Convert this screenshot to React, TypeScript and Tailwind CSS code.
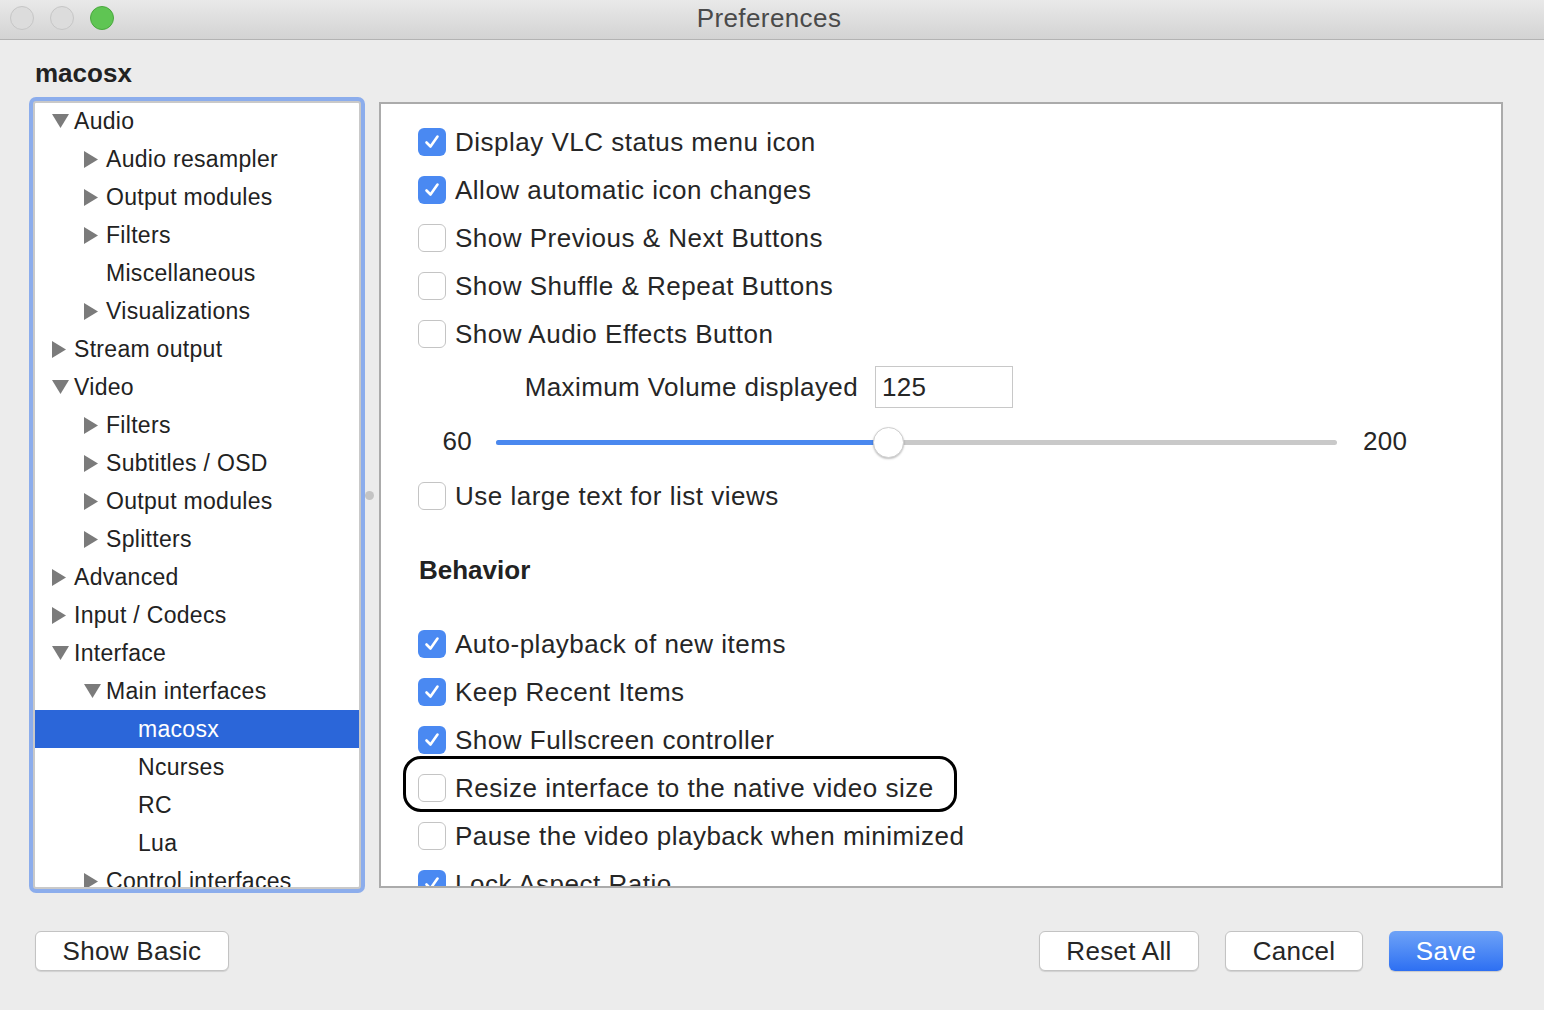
import React from "react"

type TreeItem = { label: string; level: number; arrow?: "down" | "right"; selected?: boolean }

const tree: TreeItem[] = [
  { label: "Audio", level: 0, arrow: "down" },
  { label: "Audio resampler", level: 1, arrow: "right" },
  { label: "Output modules", level: 1, arrow: "right" },
  { label: "Filters", level: 1, arrow: "right" },
  { label: "Miscellaneous", level: 1 },
  { label: "Visualizations", level: 1, arrow: "right" },
  { label: "Stream output", level: 0, arrow: "right" },
  { label: "Video", level: 0, arrow: "down" },
  { label: "Filters", level: 1, arrow: "right" },
  { label: "Subtitles / OSD", level: 1, arrow: "right" },
  { label: "Output modules", level: 1, arrow: "right" },
  { label: "Splitters", level: 1, arrow: "right" },
  { label: "Advanced", level: 0, arrow: "right" },
  { label: "Input / Codecs", level: 0, arrow: "right" },
  { label: "Interface", level: 0, arrow: "down" },
  { label: "Main interfaces", level: 1, arrow: "down" },
  { label: "macosx", level: 2, selected: true },
  { label: "Ncurses", level: 2 },
  { label: "RC", level: 2 },
  { label: "Lua", level: 2 },
  { label: "Control interfaces", level: 1, arrow: "right" },
]

const levelPad = ["pl-[17px]", "pl-[49px]", "pl-[81px]"]

function Arrow({ dir }: { dir: "down" | "right" }) {
  if (dir === "down")
    return (
      <svg width="17" height="14" viewBox="0 0 17 14">
        <path d="M0 0 H17 L8.5 14 Z" fill="#7b7b7b" />
      </svg>
    )
  return (
    <svg width="14" height="17" viewBox="0 0 14 17">
      <path d="M0 0 L14 8.5 L0 17 Z" fill="#7b7b7b" />
    </svg>
  )
}

function Checkbox({ checked }: { checked: boolean }) {
  if (checked)
    return (
      <div className="w-[28px] h-[28px] shrink-0 rounded-[6px] bg-[#4a89f2] flex items-center justify-center">
        <svg width="18" height="18" viewBox="0 0 18 18">
          <path d="M3.5 9.5 L7.5 13.5 L14.5 3.5" fill="none" stroke="white" strokeWidth="2.6" strokeLinecap="round" strokeLinejoin="round" />
        </svg>
      </div>
    )
  return <div className="w-[28px] h-[28px] shrink-0 rounded-[6px] bg-white border border-[#c4c4c4]" />
}

function CheckRow({ label, checked, outlined }: { label: string; checked: boolean; outlined?: boolean }) {
  return (
    <div className="relative h-12 flex items-center pl-[37px] gap-[9px] shrink-0">
      <Checkbox checked={checked} />
      <span className="text-[26px] tracking-[0.5px] text-[#262626] whitespace-nowrap">{label}</span>
      {outlined && (
        <div className="absolute left-[22px] top-[-8px] w-[554px] h-[56px] rounded-[18px] border-[3px] border-black" />
      )}
    </div>
  )
}

function Button({ children, w, primary }: { children: React.ReactNode; w: string; primary?: boolean }) {
  return (
    <div
      className={
        primary
          ? `${w} h-[40px] rounded-[6px] bg-gradient-to-b from-[#6ea2f7] to-[#2d6ff2] text-white text-[26px] tracking-[0.3px] flex items-center justify-center shadow-[0_1px_1px_rgba(0,0,0,0.15)]`
          : `${w} h-[40px] rounded-[6px] bg-white border border-[#c3c3c3] text-[#262626] text-[26px] tracking-[0.3px] flex items-center justify-center shadow-[0_1px_1px_rgba(0,0,0,0.12)]`
      }
    >
      {children}
    </div>
  )
}

export default function App() {
  return (
    <div className="w-[1544px] h-[1010px] bg-[#ececec] flex flex-col overflow-hidden font-['Liberation_Sans',Arial,sans-serif]">
      {/* title bar */}
      <div className="relative h-[40px] shrink-0 bg-gradient-to-b from-[#e9e9e9] to-[#d3d3d3] border-b border-[#b3b3b3] flex items-center">
        <div className="flex items-center gap-[16px] pl-[10px] -mt-[4px]">
          <div className="w-[24px] h-[24px] rounded-full bg-[#dcdcdc] border border-[#c6c6c6]" />
          <div className="w-[24px] h-[24px] rounded-full bg-[#dcdcdc] border border-[#c6c6c6]" />
          <div className="w-[24px] h-[24px] rounded-full bg-[#5fc553] border border-[#4aa83e]" />
        </div>
        <div className="absolute inset-0 flex items-center justify-center -mt-[2px]">
          <span className="text-[26px] tracking-[0.4px] text-[#4a4a4a] ml-[-6px]">Preferences</span>
        </div>
      </div>

      {/* header */}
      <div className="h-[61px] shrink-0 pl-[35px] pt-[6px] flex items-center">
        <span className="text-[26px] font-bold text-[#222]">macosx</span>
      </div>

      {/* main */}
      <div className="flex pl-[33px] h-[788px] shrink-0">
        <div className="w-[328px] h-[788px] bg-white border-2 border-[#c9c9c9] ring-4 ring-[#8cadec] rounded-[3px] overflow-hidden">
          <div className="-mt-[1px]">
            {tree.map((item, i) => (
              <div
                key={i}
                className={`h-[38px] flex items-center ${levelPad[item.level]} ${item.selected ? "bg-[#2b66d9] text-white" : "text-[#222]"}`}
              >
                <div className="w-[22px] shrink-0 flex items-center">{item.arrow && <Arrow dir={item.arrow} />}</div>
                <span className="text-[23px] tracking-[0.3px] whitespace-nowrap">{item.label}</span>
              </div>
            ))}
          </div>
        </div>

        <div className="w-[18px] flex items-center justify-center">
          <div className="w-[9px] h-[9px] rounded-full bg-[#c4c4c4] ml-[-1px]" />
        </div>

        <div className="w-[1124px] h-[786px] mt-[1px] bg-white border-2 border-[#ababab] overflow-hidden">
          <div className="pt-[14px] flex flex-col">
            <CheckRow label="Display VLC status menu icon" checked />
            <CheckRow label="Allow automatic icon changes" checked />
            <CheckRow label="Show Previous & Next Buttons" checked={false} />
            <CheckRow label="Show Shuffle & Repeat Buttons" checked={false} />
            <CheckRow label="Show Audio Effects Button" checked={false} />

            <div className="h-[58px] flex items-center shrink-0">
              <div className="w-[477px] flex justify-end">
                <span className="text-[26px] tracking-[0.4px] text-[#262626] whitespace-nowrap">Maximum Volume displayed</span>
              </div>
              <div className="ml-[17px] w-[138px] h-[42px] border border-[#c8c8c8] bg-white flex items-center pl-[6px]">
                <span className="text-[26px] tracking-[0.3px] text-[#262626]">125</span>
              </div>
            </div>

            <div className="h-[50px] mb-[6px] flex items-center shrink-0">
              <div className="ml-[36px] w-[55px] text-right text-[26px] tracking-[0.3px] text-[#262626]">60</div>
              <div className="relative ml-[24px] w-[841px] h-[5px] rounded-full bg-[#c9c9c9] mt-[2px]">
                <div className="absolute left-0 top-0 h-[5px] w-[392px] rounded-full bg-[#4a88ef]" />
                <div className="absolute left-[377px] top-[-13px] w-[31px] h-[31px] rounded-full bg-white border border-[#d0d0d0] shadow-[0_1px_2px_rgba(0,0,0,0.25)]" />
              </div>
              <div className="ml-[26px] text-[26px] tracking-[0.3px] text-[#262626]">200</div>
            </div>

            <CheckRow label="Use large text for list views" checked={false} />

            <div className="h-[100px] pl-[38px] flex items-center shrink-0">
              <span className="text-[26px] font-bold text-[#222]">Behavior</span>
            </div>

            <CheckRow label="Auto-playback of new items" checked />
            <CheckRow label="Keep Recent Items" checked />
            <CheckRow label="Show Fullscreen controller" checked />
            <CheckRow label="Resize interface to the native video size" checked={false} outlined />
            <CheckRow label="Pause the video playback when minimized" checked={false} />
            <CheckRow label="Lock Aspect Ratio" checked />
          </div>
        </div>
      </div>

      {/* footer */}
      <div className="flex items-center pl-[35px] pr-[41px] mt-[42px]">
        <Button w="w-[194px]">Show Basic</Button>
        <div className="flex-1" />
        <div className="flex gap-[26px]">
          <Button w="w-[160px]">Reset All</Button>
          <Button w="w-[138px]">Cancel</Button>
          <Button w="w-[114px]" primary>Save</Button>
        </div>
      </div>
    </div>
  )
}
